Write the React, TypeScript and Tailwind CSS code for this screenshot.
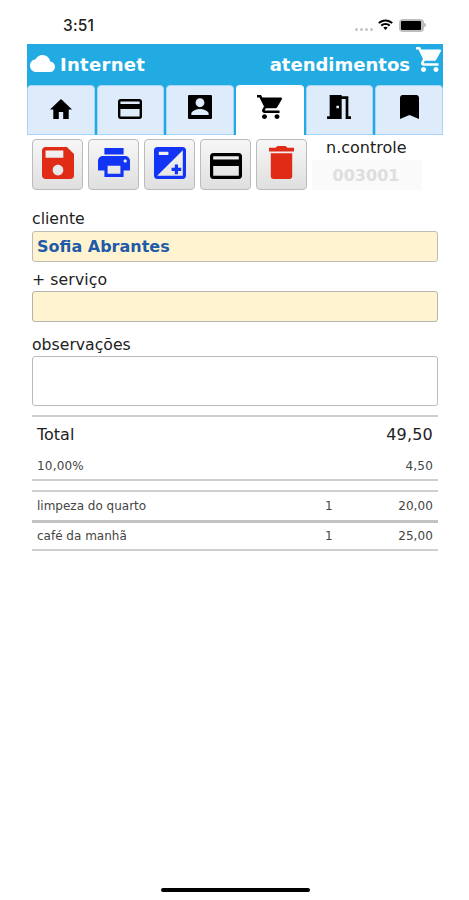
import React from "react";

type GlyphProps = { box: string; d: string; className: string };

function Glyph({ box, d, className }: GlyphProps) {
  return (
    <svg viewBox={box} preserveAspectRatio="none" fill="currentColor" className={className}>
      <path d={d} />
    </svg>
  );
}

const PATHS = {
  cloud:
    "M19.35 10.04C18.67 6.59 15.64 4 12 4 9.11 4 6.6 5.64 5.35 8.04 2.34 8.36 0 10.91 0 14c0 3.31 2.69 6 6 6h13c2.76 0 5-2.24 5-5 0-2.64-2.05-4.78-4.65-4.96z",
  cart:
    "M7 18c-1.1 0-1.99.9-1.99 2S5.9 22 7 22s2-.9 2-2-.9-2-2-2zM1 2v2h2l3.6 7.59-1.35 2.45c-.16.28-.25.61-.25.96 0 1.1.9 2 2 2h12v-2H7.42c-.14 0-.25-.11-.25-.25l.03-.12.9-1.63h7.45c.75 0 1.41-.41 1.75-1.03l3.58-6.49c.08-.14.12-.31.12-.48 0-.55-.45-1-1-1H5.21l-.94-2H1zm16 16c-1.1 0-1.99.9-1.99 2s.89 2 1.99 2 2-.9 2-2-.9-2-2-2z",
  home: "M10 20v-6h4v6h5v-8h3L12 3 2 12h3v8z",
  card: "M20 4H4c-1.11 0-1.99.89-1.99 2L2 18c0 1.11.89 2 2 2h16c1.11 0 2-.89 2-2V6c0-1.11-.89-2-2-2zm0 14H4v-6h16v6zm0-10H4V6h16v2z",
  account:
    "M3 4v16c0 .6.4 1 1 1h16c.6 0 1-.4 1-1V4c0-.6-.4-1-1-1H4c-.6 0-1 .4-1 1zm12.300 4.800c0 1.820-1.480 3.300-3.300 3.300s-3.300-1.480-3.300-3.300 1.480-3.300 3.300-3.300 3.300 1.480 3.300 3.300zM5.500 17c0-2.200 4.300-3.500 6.500-3.500s6.500 1.300 6.500 3.500v1H5.500v-1z",
  door: "M14 6v15H3v-2h2V3h9v1h5v15h2v2h-4V6h-3zm-4 5v2h2v-2h-2z",
  bookmark: "M17 3H7c-1.1 0-1.99.9-1.99 2L5 21l7-3 7 3V5c0-1.1-.9-2-2-2z",
  save: "M17 3H5c-1.11 0-2 .9-2 2v14c0 1.1.89 2 2 2h14c1.1 0 2-.9 2-2V7l-4-4zm-5 16c-1.66 0-3-1.34-3-3s1.34-3 3-3 3 1.34 3 3-1.34 3-3 3zm3-10H5V5h10v4z",
  print:
    "M19 8H5c-1.66 0-3 1.34-3 3v6h4v4h12v-4h4v-6c0-1.66-1.34-3-3-3zm-3 11H8v-5h8v5zm3-7c-.55 0-1-.45-1-1s.45-1 1-1 1 .45 1 1-.45 1-1 1zm-1-9H6v4h12V3z",
  exposure:
    "M15 17v2h2v-2h2v-2h-2v-2h-2v2h-2v2h2zm5-15H4c-1.1 0-2 .9-2 2v16c0 1.1.9 2 2 2h16c1.1 0 2-.9 2-2V4c0-1.1-.9-2-2-2zM5 5h6v2H5V5zm15 15H4L20 4v16z",
  trash: "M6 19.500c0 .9.7 1.500 1.500 1.500h9c.8 0 1.500-.6 1.500-1.500V7H6v12.500zM19 4h-3.700c-.4-.7-1-1-1.800-1h-3c-.8 0-1.400.3-1.800 1H5v2h14V4z",
};

const tabs = [
  { box: "2 3 20 17", d: PATHS.home, size: "h-5 w-[22px]" },
  { box: "2 4 20 16", d: PATHS.card, size: "h-5 w-6" },
  { box: "3 3 18 18", d: PATHS.account, size: "h-6 w-6" },
  { box: "1 2 20 20", d: PATHS.cart, size: "h-6 w-[25px]", active: true },
  { box: "3 3 18 18", d: PATHS.door, size: "h-6 w-6" },
  { box: "5 3 14 18", d: PATHS.bookmark, size: "h-6 w-[19px]" },
];

const tools = [
  { box: "3 3 18 18", d: PATHS.save, look: "h-8 w-8 mt-[7px] text-[#e02c16]" },
  { box: "2 3 20 18", d: PATHS.print, look: "h-[29px] w-8 mt-[8px] text-[#1235f5]" },
  { box: "2 2 20 20", d: PATHS.exposure, look: "h-8 w-8 mt-[7px] text-[#1235f5]" },
  { box: "2 4 20 16", d: PATHS.card, look: "h-[26px] w-8 mt-[13px] text-black" },
  { box: "5 3 14 18", d: PATHS.trash, look: "h-[33px] w-[25px] mt-[6px] text-[#e02c16]" },
];

const items = [
  { name: "limpeza do quarto", qty: "1", value: "20,00" },
  { name: "café da manhã", qty: "1", value: "25,00" },
];

function StatusBar() {
  return (
    <div className="flex h-11 items-start pl-[63px] pr-[43px] pt-4">
      <span className="font-['Inter',sans-serif] text-[15.5px] font-medium leading-5 tracking-[0.2px] text-[#222]">3:51</span>
      <div className="ml-auto flex h-[18px] items-center">
        <div className="mr-[4px] mt-2 flex gap-[2px]">
          {[0, 1, 2, 3].map((n) => (
            <i key={n} className="h-[3px] w-[3px] rounded-full bg-[#c4c4c4]" />
          ))}
        </div>
        <svg viewBox="0 0 17 12" className="mr-[5px] h-3 w-[17px] fill-black">
          <path d="M8.5 2.4c2.3 0 4.4.9 6 2.4l1.4-1.4C13.900 1.500 11.300.4 8.500.4S3.100 1.500 1.100 3.400l1.400 1.400c1.600-1.500 3.700-2.400 6-2.400zm0 3.700c1.300 0 2.500.5 3.400 1.300l1.400-1.400c-1.300-1.200-3-1.900-4.800-1.900s-3.500.7-4.800 1.900l1.400 1.400c.9-.8 2.100-1.300 3.400-1.300zm2.200 2.500c-.6-.5-1.400-.8-2.200-.8s-1.600.3-2.200.8l2.200 2.400z" />
        </svg>
        <div className="h-[13px] w-[25px] rounded-[4px] bg-[#bdbdbd] p-[2px]">
          <div className="h-full w-5 rounded-[1px] bg-black" />
        </div>
        <i className="h-1 w-[2px] rounded-r-full bg-[#bdbdbd]" />
      </div>
    </div>
  );
}

function Header() {
  return (
    <header className="flex h-[41px] items-start bg-[#22abe2] pl-[3px] pr-[2px] text-[18px] font-bold leading-6 text-white">
      <Glyph box="0 4 24 16" d={PATHS.cloud} className="mt-[11px] h-[17px] w-[25px]" />
      <span className="ml-[5px] mt-[9px] tracking-[0.3px]">Internet</span>
      <span className="ml-auto mt-[9px]">atendimentos</span>
      <Glyph box="1 2 20 20" d={PATHS.cart} className="ml-[6px] mt-[3px] h-[25px] w-[25px]" />
    </header>
  );
}

function Tabs() {
  return (
    <nav className="grid h-[50px] grid-cols-6 gap-[2px] bg-[#22abe2] text-black">
      {tabs.map((t, i) => (
        <div
          key={i}
          className={
            t.active
              ? "flex items-end justify-center rounded-t-[4px] bg-white pb-4"
              : "flex items-end justify-center rounded-t-[4px] border border-[#a8d6fa] bg-[#deebfb] pb-[15px]"
          }
        >
          <Glyph box={t.box} d={t.d} className={t.size} />
        </div>
      ))}
    </nav>
  );
}

export default function App() {
  return (
    <div className="flex h-[900px] w-[469px] flex-col overflow-hidden bg-white font-['DejaVu_Sans',Verdana,sans-serif] text-[#222]">
      <StatusBar />
      <main className="ml-[27px] w-[416px]">
        <Header />
        <Tabs />
        <div className="pl-[5px] pr-[5px]">
          <div className="flex h-[56px] gap-[5px] pt-[4px]">
            {tools.map((t, i) => (
              <button
                key={i}
                className="flex h-[51px] w-[51px] shrink-0 items-start justify-center rounded-[4px] border border-[#bcbcbc] bg-linear-to-b from-[#f7f7f7] to-[#dfdfdf]"
              >
                <Glyph box={t.box} d={t.d} className={t.look} />
              </button>
            ))}
            <div className="w-[110px] shrink-0">
              <div className="pl-[14px] text-[16px] leading-[18px]">n.controle</div>
              <div className="mt-[3px] h-[30px] bg-[#fafafa] text-center text-[16px] font-bold leading-[31px] text-[#dedede]">
                <span className="pr-[2px]">003001</span>
              </div>
            </div>
          </div>
          <label className="mt-[17px] block h-[23px] text-[15.700px] leading-[22px]">cliente</label>
          <div className="h-[31px] rounded-[3px] border border-[#bdbdb5] bg-[#fff4cf] pl-1 text-[16px] font-bold leading-[30px] text-[#1f5ba8]">
            Sofia Abrantes
          </div>
          <label className="mt-[7px] block h-[22px] text-[15.700px] leading-[21px] tracking-[0.1px]">+ serviço</label>
          <div className="h-[31px] rounded-[3px] border border-[#b5b5ad] bg-[#fff4cf]" />
          <label className="mt-[12px] block h-[22px] text-[15.700px] leading-[22px]">observações</label>
          <div className="h-[50px] rounded-[3px] border border-[#bcbcbc] bg-white" />

          <section className="mt-[9px] h-[66px] border-y-2 border-[#cfcfcf] px-[5px]">
            <div className="flex h-[35px] items-center justify-between text-[16px]">
              <span>Total</span>
              <span className="tracking-[0.2px]">49,50</span>
            </div>
            <div className="flex h-[28px] items-center justify-between text-[12px] tracking-[0.2px] text-[#444]">
              <span>10,00%</span>
              <span>4,50</span>
            </div>
          </section>
          <section className="mt-[9px] border-t-2 border-[#cfcfcf] text-[12px] text-[#444]">
            {items.map((item, i) => (
              <div
                key={item.name}
                className={
                  i === 0
                    ? "flex h-[31px] items-center border-b-3 border-[#c2c2c2] px-[5px]"
                    : "flex h-[28px] items-center border-b-2 border-[#cfcfcf] px-[5px]"
                }
              >
                <span className="w-[288px]">{item.name}</span>
                <span>{item.qty}</span>
                <span className="ml-auto tracking-[0.1px]">{item.value}</span>
              </div>
            ))}
          </section>
        </div>
      </main>
      <div className="mb-2 ml-[161px] mt-auto h-1 w-[149px] rounded-full bg-black" />
    </div>
  );
}
